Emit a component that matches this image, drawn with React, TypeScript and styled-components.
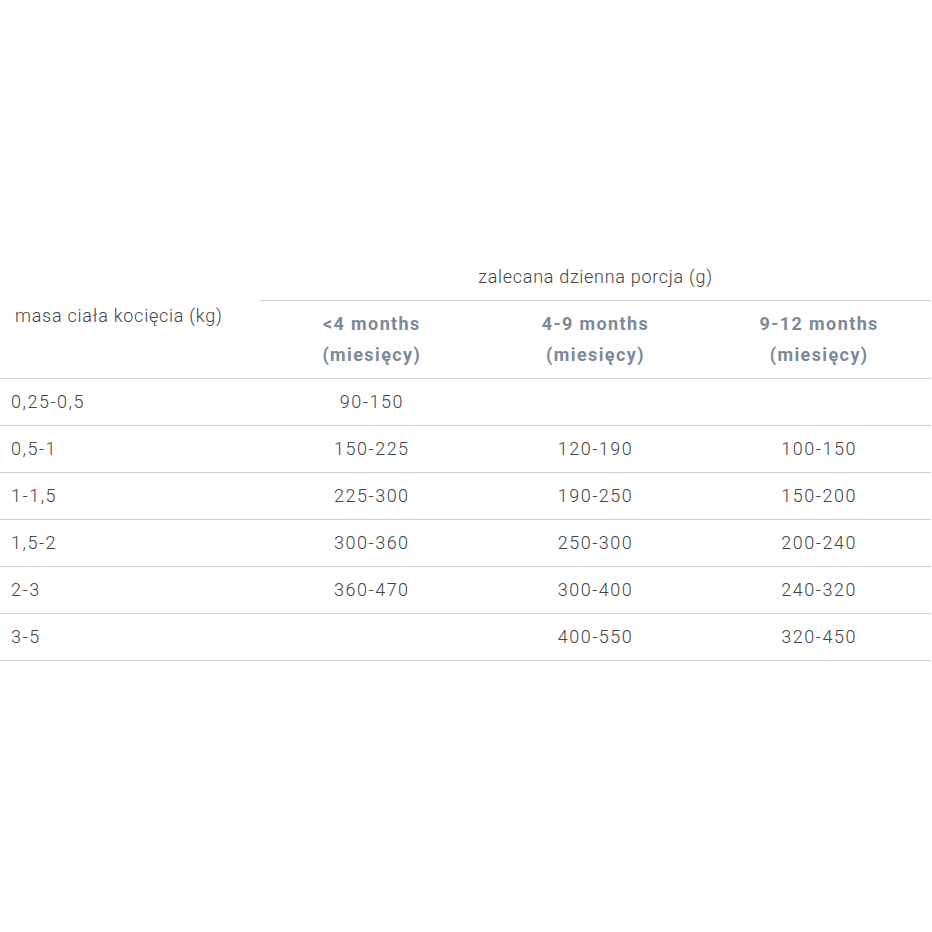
import React from 'react'
import styled, { createGlobalStyle } from 'styled-components'

const GlobalStyle = createGlobalStyle`
  html, body {
    margin: 0;
    padding: 0;
    background: #ffffff;
  }
  body {
    font-family: Roboto, "Liberation Sans", sans-serif;
  }
`

const Page = styled.div`
  width: 932px;
  height: 932px;
  padding-top: 255px;
  box-sizing: border-box;
`

const Table = styled.table`
  width: 931px;
  border-collapse: collapse;
  table-layout: fixed;
  color: #444444;
  font-size: 18px;
  font-weight: 300;
`

const GroupHead = styled.th`
  height: 42px;
  padding: 0 0 3px;
  font-weight: 300;
  letter-spacing: 0.7px;
  text-align: center;
  vertical-align: middle;
  border-bottom: 1px solid #cfcfcf;
`

const WeightHead = styled.th`
  padding: 0 0 3px 15px;
  text-align: left;
  font-weight: 300;
  letter-spacing: 0.75px;
  vertical-align: middle;
  border-bottom: 1px solid #cfcfcf;
`

const AgeHead = styled.th`
  height: 75px;
  padding: 0 0 2px;
  color: #7e8998;
  font-weight: 700;
  line-height: 31px;
  letter-spacing: 1.4px;
  text-align: center;
  vertical-align: middle;
  border-bottom: 1px solid #cfcfcf;
`

const Cell = styled.td<{ $first?: boolean }>`
  height: 44px;
  padding: 0 0 2px ${p => (p.$first ? '11px' : '0')};
  text-align: ${p => (p.$first ? 'left' : 'center')};
  letter-spacing: 1.5px;
  vertical-align: middle;
  border-bottom: 1px solid #cfcfcf;
`

const rows = [
  ['0,25-0,5', '90-150', '', ''],
  ['0,5-1', '150-225', '120-190', '100-150'],
  ['1-1,5', '225-300', '190-250', '150-200'],
  ['1,5-2', '300-360', '250-300', '200-240'],
  ['2-3', '360-470', '300-400', '240-320'],
  ['3-5', '', '400-550', '320-450'],
]

const ages = ['<4 months', '4-9 months', '9-12 months']

export default function App() {
  return (
    <Page>
      <GlobalStyle />
      <Table>
        <colgroup>
          <col style={{ width: 260 }} />
          <col />
          <col />
          <col />
        </colgroup>
        <thead>
          <tr>
            <WeightHead rowSpan={2}>masa ciała kocięcia (kg)</WeightHead>
            <GroupHead colSpan={3}>zalecana dzienna porcja (g)</GroupHead>
          </tr>
          <tr>
            {ages.map(a => (
              <AgeHead key={a}>
                {a}
                <br />
                (miesięcy)
              </AgeHead>
            ))}
          </tr>
        </thead>
        <tbody>
          {rows.map(r => (
            <tr key={r[0]}>
              {r.map((v, i) => (
                <Cell key={i} $first={i === 0}>
                  {v}
                </Cell>
              ))}
            </tr>
          ))}
        </tbody>
      </Table>
    </Page>
  )
}
